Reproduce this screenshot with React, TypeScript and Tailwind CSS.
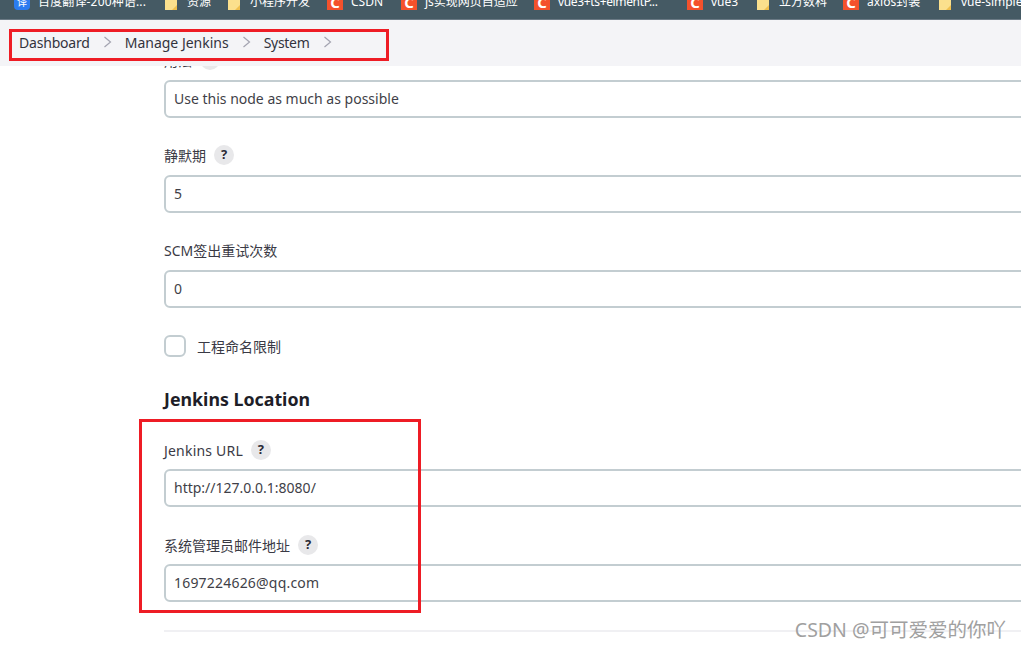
import React from 'react';

const FONT = '"Noto Sans", "Noto Sans CJK SC", sans-serif';

const bookmarks: { label: string; icon: 'fy' | 'folder' | 'csdn'; width: string; text?: string }[] = [
  { label: '百度翻译-200种语...', icon: 'fy', width: 'w-[151px]', text: 'tracking-[0.15px]' },
  { label: '资源', icon: 'folder', width: 'w-[63px]' },
  { label: '小程序开发', icon: 'folder', width: 'w-[99px]' },
  { label: 'CSDN', icon: 'csdn', width: 'w-[74px]' },
  { label: 'js实现网页自适应', icon: 'csdn', width: 'w-[133px]' },
  { label: 'vue3+ts+elmentP...', icon: 'csdn', width: 'w-[153px]', text: 'tracking-[-0.35px]' },
  { label: 'vue3', icon: 'csdn', width: 'w-[70px]' },
  { label: '立方数科', icon: 'folder', width: 'w-[86px]' },
  { label: 'axios封装', icon: 'csdn', width: 'w-[96px]' },
  { label: 'vue-simple', icon: 'folder', width: 'w-[90px]' },
];

const BookmarkIcon = ({ kind }: { kind: 'fy' | 'folder' | 'csdn' }) => {
  if (kind === 'fy') {
    return <span className="flex h-4 w-4 items-center justify-center rounded-sm bg-[#2b7cf0] text-[10px] leading-none text-white">译</span>;
  }
  if (kind === 'csdn') {
    return <span className="flex h-4 w-4 items-center justify-center bg-[#f4512c] text-[15px] font-bold leading-none text-white">C</span>;
  }
  return (
    <svg width="16" height="16" viewBox="0 0 16 16" className="mr-[-2px]">
      <path d="M0 0h12v16H0z" fill="#fbe08d" />
      <path d="M7 16l5-5v5z" fill="#f0c04e" />
    </svg>
  );
};

const Help = () => (
  <span className="flex h-5 w-5 shrink-0 items-center justify-center rounded-full bg-[#e8e8ea] text-[13px] font-bold text-[#2a2a35]">?</span>
);

const Field = ({ label, value, help = true, labelClass = '', valueClass = '', rowClass = 'pb-0.5' }: { label: string; value: string; help?: boolean; labelClass?: string; valueClass?: string; rowClass?: string }) => (
  <div className="mb-[26px]">
    <div className={`mb-[7px] flex h-6 items-center gap-[8px] text-[14px] text-[#3a3a45] ${rowClass}`}>
      <span className={labelClass}>{label}</span>
      {help && <Help />}
    </div>
    <div className={`flex h-[38px] items-center rounded-md border-2 border-[#c3cdd1] bg-white pb-px pl-2 text-[14px] text-[#3f3f48] ${valueClass}`}>
      {value}
    </div>
  </div>
);

function Chevron() {
  return (
    <svg width="9" height="12" viewBox="0 0 9 12" fill="none" stroke="currentColor" strokeWidth="1.2">
      <path d="M1.5 1l6 5-6 5" />
    </svg>
  );
}

const App: React.FC = () => {
  return (
    <div className="relative flex h-[648px] w-[1021px] flex-col overflow-hidden bg-white" style={{ fontFamily: FONT }}>
      <div className="h-5 shrink-0 overflow-hidden border-b border-[#6b7a85] bg-[#455a64]">
        <div className="-mt-[10px] flex items-center whitespace-nowrap pl-[14px] text-[12px] leading-6 text-white">
          {bookmarks.map((b) => (
            <div key={b.label} className={`flex shrink-0 items-center gap-2 ${b.width}`}>
              <BookmarkIcon kind={b.icon} />
              <span className={b.text}>{b.label}</span>
            </div>
          ))}
        </div>
      </div>

      <div className="z-10 flex h-[46px] shrink-0 items-center bg-[#f4f4f7] pb-0.5 pl-[19px] text-[14px] text-[#33333d]">
        <span className="tracking-[-0.2px]">Dashboard</span>
        <span className="ml-[13px] mr-[13px] text-[#a3a3b0]"><Chevron /></span>
        <span>Manage Jenkins</span>
        <span className="ml-[13px] mr-[13px] text-[#a3a3b0]"><Chevron /></span>
        <span className="tracking-[-0.3px]">System</span>
        <span className="ml-[13px] text-[#a3a3b0]"><Chevron /></span>
      </div>

      <main className="-mr-[40px] -mt-[17px] flex-1 pl-[164px]">
        <Field label="用法" value="Use this node as much as possible" />
        <Field label="静默期" value="5" />
        <Field label="SCM签出重试次数" value="0" help={false} />
        <div className="flex items-center gap-[11px] pt-px text-[14px] text-[#3a3a45]">
          <span className="h-[22px] w-[22px] rounded-md border-2 border-[#c3cdd1]" />
          <span>工程命名限制</span>
        </div>
        <h2 className="mb-6 mt-[27px] text-[17.8px] font-bold leading-[30px] text-[#1e1e28]">Jenkins Location</h2>
        <Field label="Jenkins URL" value="http://127.0.0.1:8080/" labelClass="tracking-[0.2px]" rowClass="" />
        <Field label="系统管理员邮件地址" value="1697224626@qq.com" valueClass="tracking-[0.2px]" rowClass="" />
        <div className="mt-[28px] h-0.5 bg-[#f0f0f3]" />
      </main>

      <div className="absolute left-[9px] top-[29px] z-20 h-[32px] w-[380px] border-[3px] border-[#ee1c25]" />
      <div className="absolute left-[139px] top-[419px] z-20 h-[194px] w-[282px] border-[3px] border-[#ee1c25]" />
      <div className="absolute right-[15px] top-[615px] z-20 text-[19.5px] text-[#a0a0a0]">CSDN @可可爱爱的你吖</div>
    </div>
  );
};

export default App;
